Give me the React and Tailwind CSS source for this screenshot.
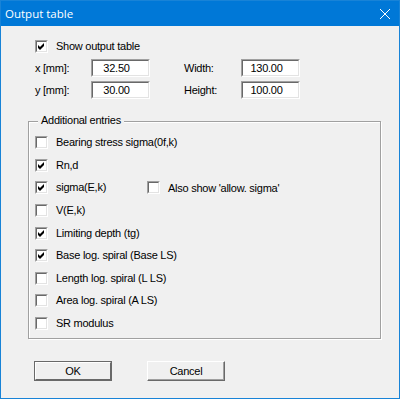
import React from 'react';

function Check({ checked }) {
  return (
    <div className="w-[13px] h-[13px] shrink-0 border border-t-[#a0a0a0] border-l-[#a0a0a0] border-r-white border-b-white">
      <div className="w-full h-full bg-white border border-t-[#696969] border-l-[#696969] border-r-[#e3e3e3] border-b-[#e3e3e3] flex items-center justify-center">
        {checked && (
          <svg width="7" height="7" viewBox="0 0 7 7">
            <path d="M0 2 L2 4 L6 0 L6 3 L2 7 L0 5 Z" fill="#000" />
          </svg>
        )}
      </div>
    </div>
  );
}

function Row({ checked, label, labelClass = '', children }) {
  return (
    <div className="h-[13px] flex items-center">
      <Check checked={checked} />
      <span className={`ml-[8px] leading-[13px] ${labelClass}`}>{label}</span>
      {children}
    </div>
  );
}

function Field({ value }) {
  return (
    <div className="w-[59px] h-[18px] shrink-0 border border-t-[#a0a0a0] border-l-[#a0a0a0] border-r-white border-b-white">
      <div className="w-full h-full bg-white border border-t-[#696969] border-l-[#696969] border-r-[#e3e3e3] border-b-[#e3e3e3] flex items-center justify-center pr-[8px]">
        {value}
      </div>
    </div>
  );
}

export default function App() {
  const entries = [
    { label: 'Bearing stress sigma(0f,k)', checked: false },
    { label: 'Rn,d', checked: true },
    { label: 'sigma(E,k)', checked: true, extra: true },
    { label: 'V(E,k)', checked: false },
    { label: 'Limiting depth (tg)', checked: true },
    { label: 'Base log. spiral (Base LS)', checked: true },
    { label: 'Length log. spiral (L LS)', checked: false },
    { label: 'Area log. spiral (A LS)', checked: false },
    { label: 'SR modulus', checked: false },
  ];

  return (
    <div className="w-[400px] h-[399px] border border-[#1883d7] bg-[#f0f0f0] flex flex-col text-[11px] tracking-[-0.25px] text-black font-['Liberation_Sans',Arial,sans-serif]">
      {/* title bar */}
      <div className="h-[25px] shrink-0 bg-[#0078d7] flex items-center justify-between pl-[4px] pr-[9px]">
        <span className="text-white text-[11.5px] tracking-normal font-['Open_Sans',sans-serif]">Output table</span>
        <svg width="10" height="10" viewBox="0 0 10 10">
          <path d="M0 0 L10 10 M10 0 L0 10" stroke="#fff" strokeWidth="1" />
        </svg>
      </div>

      <div className="flex-1 pl-[27px] pt-[14px]">
        <div className="pl-[7px]">
          <Row checked label="Show output table" />
          <div className="mt-[6px] h-[18px] flex items-center">
            <span className="w-[56px]">x [mm]:</span>
            <Field value="32.50" />
            <span className="ml-[34px] w-[57px]">Width:</span>
            <Field value="130.00" />
          </div>
          <div className="mt-[4px] h-[18px] flex items-center">
            <span className="w-[56px]">y [mm]:</span>
            <Field value="30.00" />
            <span className="ml-[34px] w-[57px]">Height:</span>
            <Field value="100.00" />
          </div>
        </div>

        {/* group box */}
        <div className="relative mt-[22px] w-[353px] h-[218px] border border-[#a0a0a0] shadow-[1px_1px_0_#fff,inset_1px_1px_0_#fff] pl-[6px] pt-[14px]">
          <span className="absolute left-[9px] top-[-8px] px-[3px] bg-[#f0f0f0] leading-[13px]">Additional entries</span>
          <div className="flex flex-col gap-[9.625px]">
            {entries.map((e) => (
              <Row key={e.label} checked={e.checked} label={e.label} labelClass={e.extra ? 'w-[91px]' : ''}>
                {e.extra && (
                  <div className="flex items-center">
                    <Check checked={false} />
                    <span className="ml-[8px]">Also show 'allow. sigma'</span>
                  </div>
                )}
              </Row>
            ))}
          </div>
        </div>

        {/* buttons */}
        <div className="mt-[22px] ml-[6px] flex gap-[35px]">
          <div className="w-[78px] h-[20px] border border-[#696969]">
            <div className="w-full h-full border border-t-white border-l-white border-r-[#696969] border-b-[#696969] flex items-center justify-center">
              OK
            </div>
          </div>
          <div className="w-[78px] h-[20px] border border-t-white border-l-white border-r-[#696969] border-b-[#696969] shadow-[inset_-1px_-1px_0_#a0a0a0] flex items-center justify-center">
            Cancel
          </div>
        </div>
      </div>
    </div>
  );
}
